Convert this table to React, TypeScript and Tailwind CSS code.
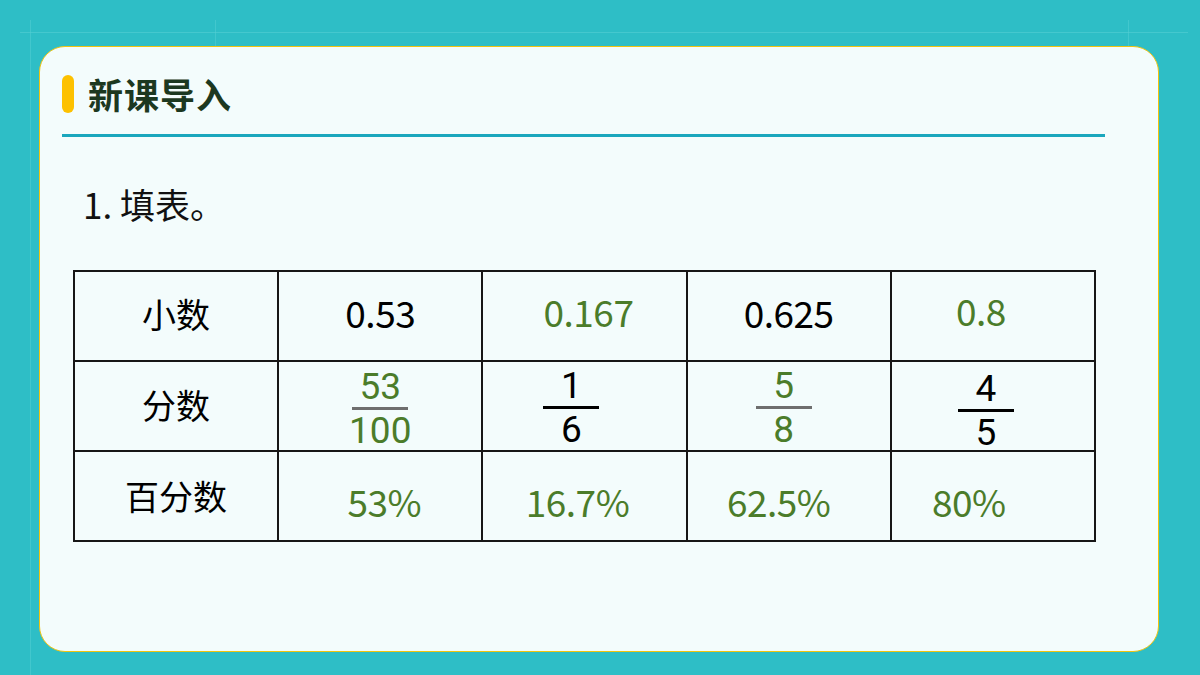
import React from "react";

const GREEN = "text-[#4b7c2a]";

function Frac({ top, bottom, green, lineGray }: { top: string; bottom: string; green?: boolean; lineGray?: boolean }) {
	return (
		<div
			className={`mx-auto flex w-fit flex-col items-center text-[37px] leading-[34px] font-['Roboto',sans-serif] ${green ? GREEN : "text-black"}`}
		>
			<span>{top}</span>
			<span className={`block h-[3px] w-[56px] mt-[3px] mb-[4px] ${lineGray ? "bg-[#6e6e6e]" : "bg-black"}`}></span>
			<span>{bottom}</span>
		</div>
	);
}

const cell = "border-2 border-[#161616] h-[90px] text-center align-middle";
const fracCell = "border-2 border-[#161616] h-[90px] text-center align-top";
const num = "text-[37px] tracking-[-0.5px]";

export default function App() {
	return (
		<div
			className="relative w-[1200px] h-[675px] overflow-hidden bg-[#2ebec6] pt-[46px] pl-[39px]"
			style={{ fontFamily: '"Noto Sans CJK SC", "Noto Sans", sans-serif' }}
		>
			{/* faint guide lines in the background */}
			<div className="absolute left-[20px] right-[12px] top-[32px] h-px bg-[#55cfd4]/60"></div>
			<div className="absolute top-[20px] bottom-0 left-[30px] w-px bg-[#55cfd4]/50"></div>
			<div className="absolute top-[20px] h-[30px] left-[215px] w-px bg-[#55cfd4]/50"></div>
			<div className="absolute top-[20px] h-[30px] left-[1128px] w-px bg-[#55cfd4]/50"></div>

			<div className="relative w-[1120px] h-[606px] rounded-[26px] border border-[#f1c40f] bg-[#f3fcfc]">
				<div className="flex items-center gap-[14px] pl-[22px] pt-[28px]">
					<div className="w-[12px] h-[38px] rounded-full bg-[#fdc100]"></div>
					<h1 className="text-[35px] font-bold leading-[38px] text-[#1c3820] tracking-[1px]">新课导入</h1>
				</div>
				<div className="ml-[22px] mt-[21px] w-[1043px] h-[3px] bg-[#1aa7bd]"></div>

				<p className="ml-[43px] mt-[44px] text-[35px] leading-[46px] text-[#111]">1. 填表。</p>

				<table className="ml-[33px] mt-[43px] table-fixed border-collapse w-[1023px] text-[34px] text-black">
					<tbody>
						<tr>
							<td className={`${cell} pb-[6px]`}>小数</td>
							<td className={`${cell} pb-[6px]`}>
								<span className={num}>0.53</span>
							</td>
							<td className={`${cell} pl-[8px] pb-[8px]`}>
								<span className={`${num} ${GREEN}`}>0.167</span>
							</td>
							<td className={`${cell} pb-[6px]`}>
								<span className={num}>0.625</span>
							</td>
							<td className={`${cell} pr-[24px] pb-[10px]`}>
								<span className={`${num} ${GREEN}`}>0.8</span>
							</td>
						</tr>
						<tr>
							<td className={`${cell} pb-[4px]`}>分数</td>
							<td className={`${fracCell} pt-[8px]`}>
								<Frac top="53" bottom="100" green lineGray />
							</td>
							<td className={`${fracCell} pr-[26px] pt-[7px]`}>
								<Frac top="1" bottom="6" />
							</td>
							<td className={`${fracCell} pr-[10px] pt-[7px]`}>
								<Frac top="5" bottom="8" green lineGray />
							</td>
							<td className={`${fracCell} pr-[14px] pt-[10px]`}>
								<Frac top="4" bottom="5" />
							</td>
						</tr>
						<tr>
							<td className={`${cell} pb-[1px]`}>百分数</td>
							<td className={`${cell} pl-[8px] pt-[12px]`}>
								<span className={`${num} ${GREEN}`}>53%</span>
							</td>
							<td className={`${cell} pr-[14px] pt-[12px]`}>
								<span className={`${num} ${GREEN}`}>16.7%</span>
							</td>
							<td className={`${cell} pr-[20px] pt-[12px]`}>
								<span className={`${num} ${GREEN}`}>62.5%</span>
							</td>
							<td className={`${cell} pr-[48px] pt-[12px]`}>
								<span className={`${num} ${GREEN}`}>80%</span>
							</td>
						</tr>
					</tbody>
				</table>
			</div>
		</div>
	);
}
